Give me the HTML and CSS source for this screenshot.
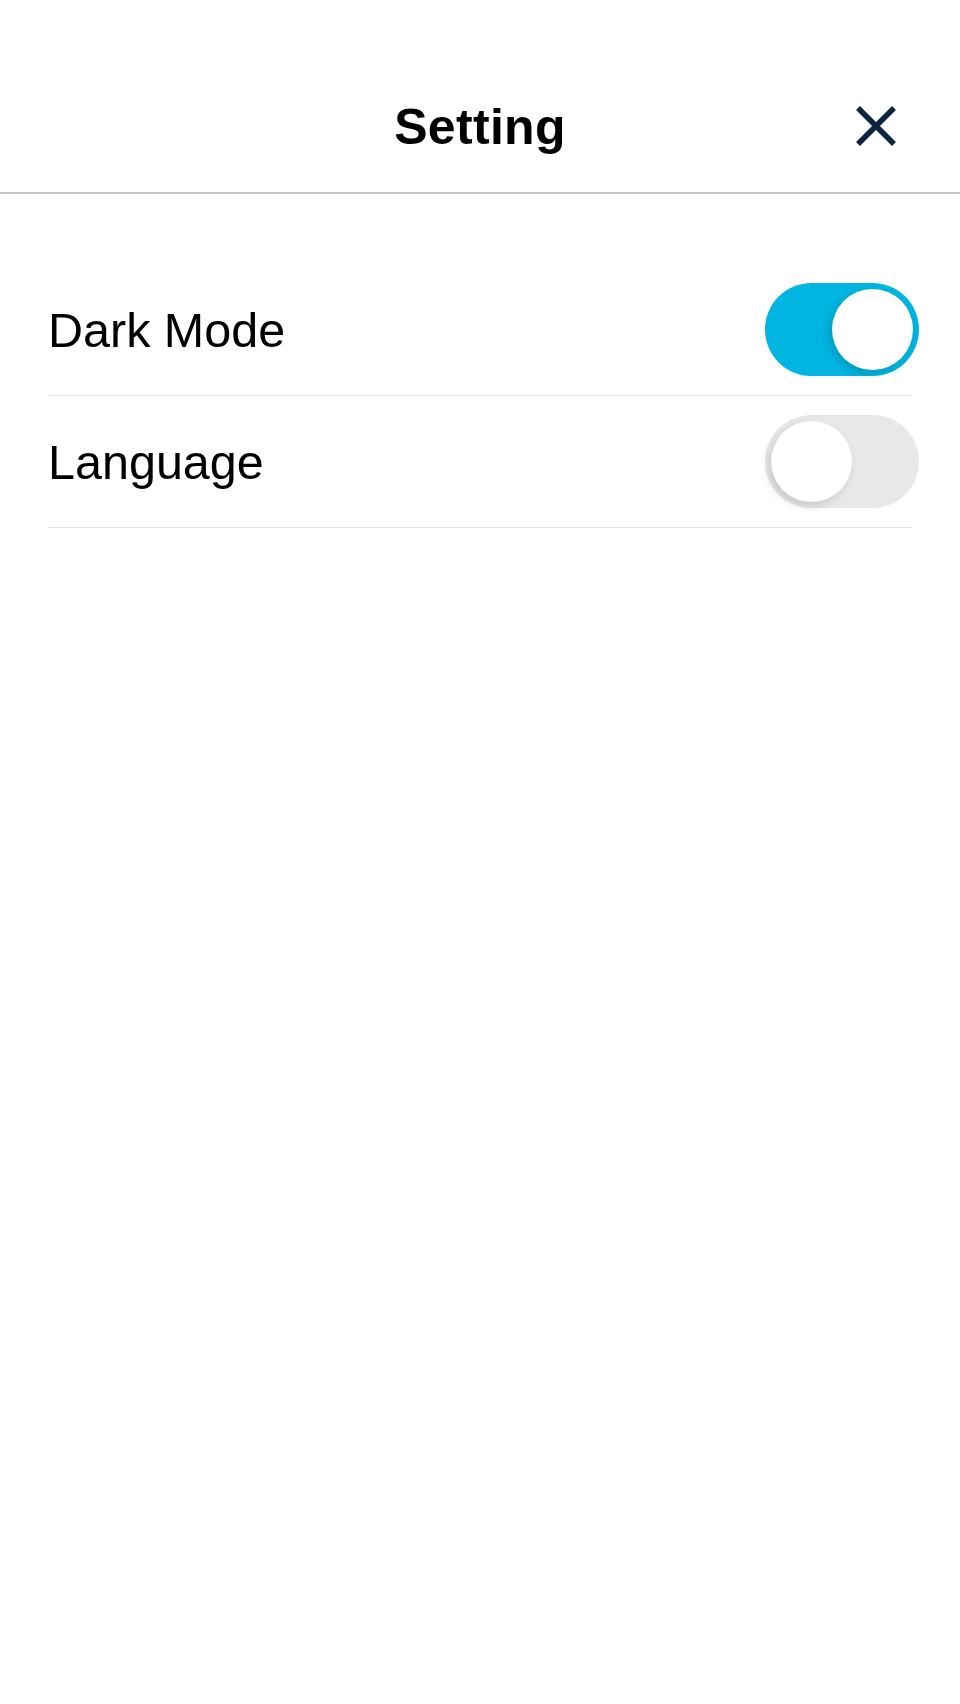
FILE: index.html
```html
<!DOCTYPE html>
<html lang="en">
<head>
<meta charset="utf-8">
<title>Setting</title>
<link rel="stylesheet" href="styles.css">
</head>
<body>
<div class="screen">
  <header class="header">
    <h1 class="title">Setting</h1>
    <button class="close" aria-label="Close">
      <svg width="42" height="42" viewBox="0 0 42 42"><path d="M3 3 L39 39 M39 3 L3 39" stroke="#0c2342" stroke-width="5.5" fill="none"/></svg>
    </button>
  </header>
  <main class="list">
    <div class="row">
      <span class="label">Dark Mode</span>
      <div class="toggle on"><span class="knob"></span></div>
    </div>
    <div class="row">
      <span class="label">Language</span>
      <div class="toggle"><span class="knob"></span></div>
    </div>
  </main>
</div>
</body>
</html>
```

FILE: styles.css
```css
* { box-sizing: border-box; }
html, body {
  margin: 0;
  padding: 0;
  background: #fff;
  font-family: "Liberation Sans", Arial, sans-serif;
  color: #000;
}
.screen {
  width: 960px;
  min-height: 1704px;
}
.header {
  position: relative;
  height: 194px;
  padding-top: 62px;
  display: flex;
  align-items: center;
  justify-content: center;
  border-bottom: 2px solid #c4c4c4;
}
.title {
  margin: 0;
  font-size: 50px;
  font-weight: 700;
  line-height: 1;
  letter-spacing: 0.3px;
}
.close {
  position: absolute;
  right: 63px;
  top: 105px;
  width: 42px;
  height: 42px;
  padding: 0;
  border: 0;
  background: none;
  display: flex;
}
.list {
  padding: 70px 48px 0 48px;
}
.row {
  height: 132px;
  display: flex;
  align-items: center;
  justify-content: space-between;
  border-bottom: 1px solid #e6e6e6;
}
.label {
  font-size: 48.5px;
  line-height: 1;
  padding-top: 2px;
}
.toggle {
  position: relative;
  width: 154px;
  height: 93px;
  border-radius: 47px;
  background: #e8e8e8;
  margin-right: -7px;
  flex: none;
}
.toggle.on {
  background: #00b5e1;
}
.knob {
  position: absolute;
  top: 6px;
  left: 6px;
  width: 81px;
  height: 81px;
  border-radius: 50%;
  background: #fff;
  box-shadow: -3px 4px 10px rgba(0, 0, 0, 0.14);
}
.toggle.on .knob {
  left: auto;
  right: 6px;
}
```
